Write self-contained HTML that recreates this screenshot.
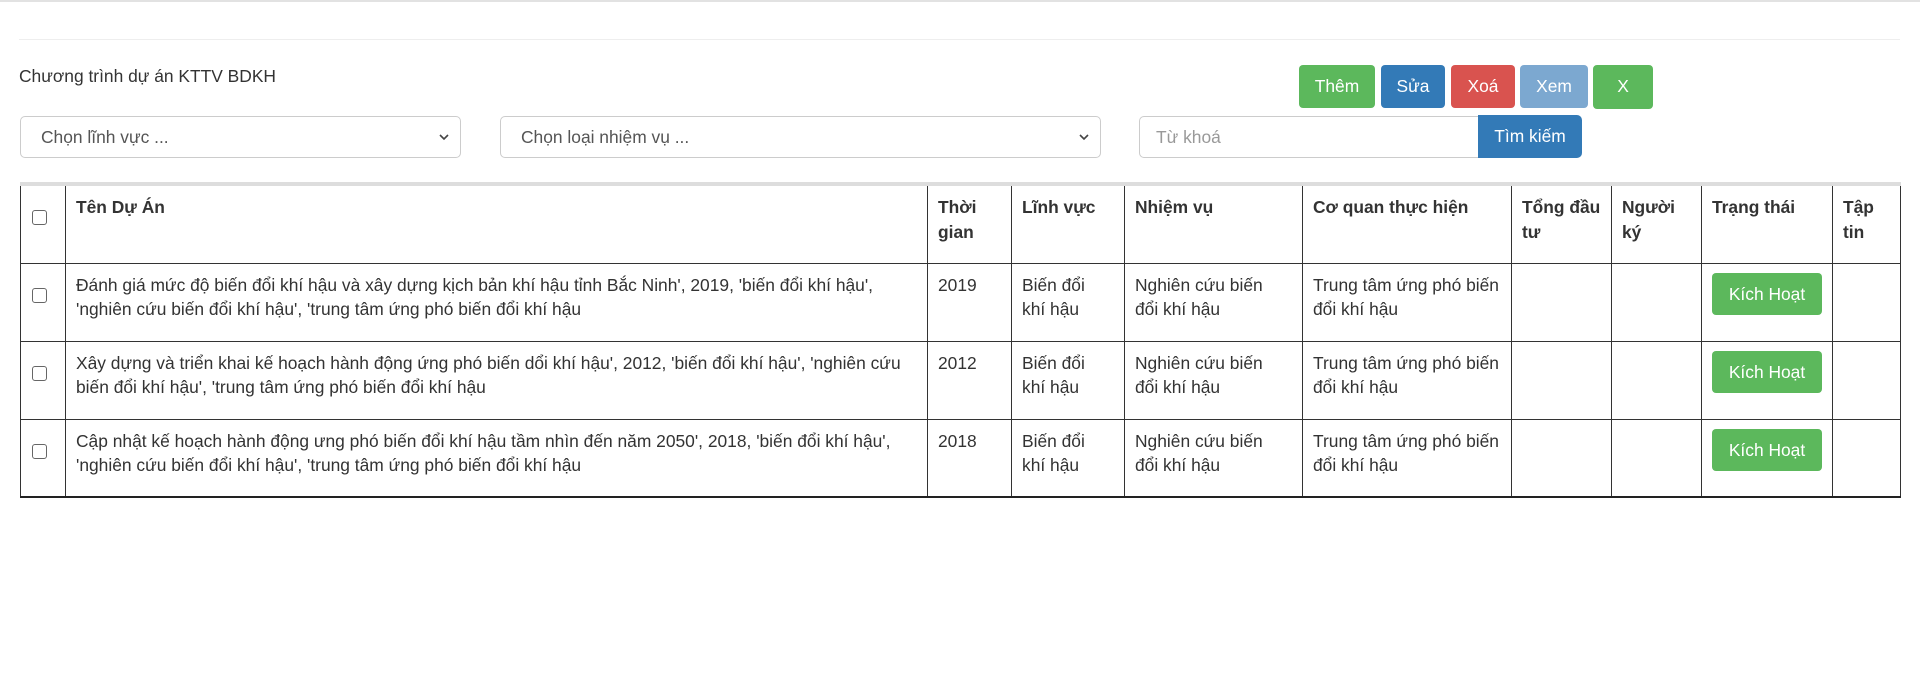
<!DOCTYPE html>
<html><head><meta charset="utf-8"><style>
*{box-sizing:border-box}
body{margin:0;width:1920px;height:673px;background:#fff;font-family:"Liberation Sans",Arial,sans-serif;font-size:17.4px;color:#333;position:relative;overflow:hidden}
.topline{position:absolute;left:0;top:0;width:1920px;height:2px;background:#e2e2e2}
.hr{position:absolute;left:19px;top:39px;width:1881px;height:1px;background:#eee}
.title{position:absolute;left:19px;top:66px}
.btn{position:absolute;color:#fff;border-radius:4px;text-align:center;font-size:17.4px;line-height:42px;height:43px;top:65px}
.sel{position:absolute;top:116px;height:42px;border:1px solid #ccc;border-radius:5px;padding-left:20px;line-height:40px;color:#555}
.sel svg{position:absolute;right:10px;top:15px}
table{position:absolute;left:20px;top:182px;width:1880px;border-collapse:collapse;table-layout:fixed}
td,th{border:1px solid #333;vertical-align:top;padding:9px 10px;line-height:24.5px;text-align:left;white-space:nowrap;overflow:hidden}
th{font-weight:bold;height:79px;border-top:4px solid #ddd}
td{height:78px}
.cb{width:15px;height:15px;border:1px solid #666;border-radius:3px;margin:15px 0 0 1px;background:#fff}
.kh{display:inline-block;background:#5cb85c;color:#fff;border-radius:4px;width:110px;height:42px;line-height:42px;text-align:center}
tr.last td{border-bottom:2px solid #222}
</style></head><body>
<div class="topline"></div>
<div class="hr"></div>
<div class="title">Chương trình dự án KTTV BDKH</div>
<div class="btn" style="left:1299px;width:76px;background:#5cb85c">Thêm</div>
<div class="btn" style="left:1381px;width:64px;background:#337ab7">Sửa</div>
<div class="btn" style="left:1451px;width:64px;background:#d9534f">Xoá</div>
<div class="btn" style="left:1520px;width:68px;background:#7ca8d0">Xem</div>
<div class="btn" style="left:1593px;width:60px;height:44px;background:#5cb85c">X</div>
<div class="sel" style="left:20px;width:441px">Chọn lĩnh vực ...<svg width="12" height="10" viewBox="0 0 12 10"><path d="M2 3l4 4 4-4" stroke="#444" stroke-width="1.6" fill="none"/></svg></div>
<div class="sel" style="left:500px;width:601px">Chọn loại nhiệm vụ ...<svg width="12" height="10" viewBox="0 0 12 10"><path d="M2 3l4 4 4-4" stroke="#444" stroke-width="1.6" fill="none"/></svg></div>
<div class="sel" style="left:1139px;width:340px;color:#999;border-radius:5px 0 0 5px;padding-left:16px">Từ khoá</div>
<div class="btn" style="left:1478px;top:115px;width:104px;height:43px;background:#337ab7;border-radius:0 5px 5px 0;line-height:43px">Tìm kiếm</div>
<table>
<colgroup><col style="width:45px"><col style="width:862px"><col style="width:84px"><col style="width:113px"><col style="width:178px"><col style="width:209px"><col style="width:100px"><col style="width:90px"><col style="width:131px"><col style="width:68px"></colgroup>
<tr><th><div class="cb"></div></th><th>Tên Dự Án</th><th>Thời<br>gian</th><th>Lĩnh vực</th><th>Nhiệm vụ</th><th>Cơ quan thực hiện</th><th>Tổng đầu<br>tư</th><th>Người<br>ký</th><th>Trạng thái</th><th>Tập<br>tin</th></tr>
<tr><td><div class="cb"></div></td><td>Đánh giá mức độ biến đổi khí hậu và xây dựng kịch bản khí hậu tỉnh Bắc Ninh', 2019, 'biến đổi khí hậu',<br>'nghiên cứu biến đổi khí hậu', 'trung tâm ứng phó biến đổi khí hậu</td><td>2019</td><td>Biến đổi<br>khí hậu</td><td>Nghiên cứu biến<br>đổi khí hậu</td><td>Trung tâm ứng phó biến<br>đổi khí hậu</td><td></td><td></td><td><span class="kh">Kích Hoạt</span></td><td></td></tr>
<tr><td><div class="cb"></div></td><td>Xây dựng và triển khai kế hoạch hành động ứng phó biến dổi khí hậu', 2012, 'biến đổi khí hậu', 'nghiên cứu<br>biến đổi khí hậu', 'trung tâm ứng phó biến đổi khí hậu</td><td>2012</td><td>Biến đổi<br>khí hậu</td><td>Nghiên cứu biến<br>đổi khí hậu</td><td>Trung tâm ứng phó biến<br>đổi khí hậu</td><td></td><td></td><td><span class="kh">Kích Hoạt</span></td><td></td></tr>
<tr class="last"><td><div class="cb"></div></td><td>Cập nhật kế hoạch hành động ưng phó biến đổi khí hậu tầm nhìn đến năm 2050', 2018, 'biến đổi khí hậu',<br>'nghiên cứu biến đổi khí hậu', 'trung tâm ứng phó biến đổi khí hậu</td><td>2018</td><td>Biến đổi<br>khí hậu</td><td>Nghiên cứu biến<br>đổi khí hậu</td><td>Trung tâm ứng phó biến<br>đổi khí hậu</td><td></td><td></td><td><span class="kh">Kích Hoạt</span></td><td></td></tr>
</table>
</body></html>
